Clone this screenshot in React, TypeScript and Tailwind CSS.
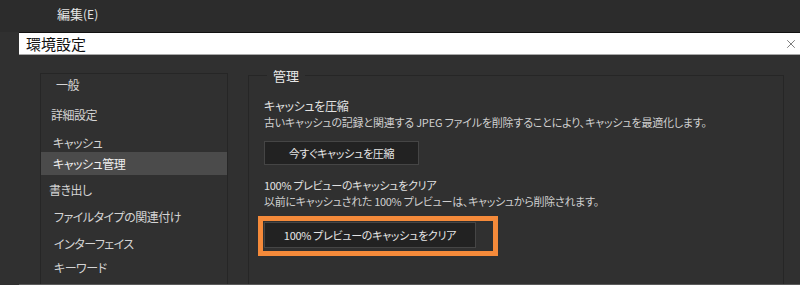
import { X } from "lucide-react";

const navItems = [
  { label: "一般", h: "h-[22px]", pl: "pl-[15px]" },
  { label: "詳細設定", h: "h-[38px]", pl: "pl-[10px]" },
  { label: "キャッシュ", h: "h-[18px]", pl: "pl-[12px]" },
  { label: "キャッシュ管理", h: "h-[23px]", pl: "pl-[12px]", active: true },
  { label: "書き出し", h: "h-[29px]", pl: "pl-[8px]" },
  { label: "ファイルタイプの関連付け", h: "h-[26px]", pl: "pl-[13px]" },
  { label: "インターフェイス", h: "h-[28px]", pl: "pl-[13px]" },
  { label: "キーワード", h: "h-[19px]", pl: "pl-[13px]" },
];

const jp = "font-['Noto_Sans_CJK_JP','Noto_Sans',sans-serif] [font-feature-settings:'palt']";

export default function App() {
  return (
    <div className={`w-[800px] h-[285px] overflow-hidden bg-[#303030] ${jp} flex flex-col`}>
      {/* Menu bar */}
      <div className="h-[32px] bg-[#2c2c2c] flex items-center pl-[57px] pb-[4px]">
        <span className="text-[13px] text-[#e4e4e4]">
          編集<span className="text-[12px]">(E)</span>
        </span>
      </div>

      {/* Dialog title */}
      <div className="ml-[19px] h-[23px] bg-white border-t border-t-[#111] border-b border-b-[#a8a8a8] flex items-center justify-between pl-[7px] pr-[2px]">
        <span className="text-[15px] leading-none text-[#111]">環境設定</span>
        <X className="w-[14px] h-[14px] text-[#555]" strokeWidth={1.3} />
      </div>

      {/* Body */}
      <div className="flex-1 ml-[19px] flex border-b border-b-[#5a5a5a]">
        <div className="flex flex-1 pl-[21px] pt-[18px]">
          {/* Left nav */}
          <div className="w-[188px] border border-[#262626] border-b-0 flex flex-col">
            {navItems.map((item) => (
              <div
                key={item.label}
                className={`${item.h} ${item.pl} flex items-center text-[12px] tracking-[-0.5px] ${
                  item.active ? "bg-[#4b4b4b] text-[#f0f0f0]" : "text-[#d4d4d4]"
                }`}
              >
                {item.label}
              </div>
            ))}
          </div>

          {/* Right group box */}
          <div className="ml-[20px] w-[536px] mt-[2px] relative border border-[#262626] border-b-0 pl-[15px] pt-[22px]">
            <span className="absolute left-[18px] top-[-10px] px-[6px] bg-[#303030] text-[13px] text-[#e8e8e8]">
              管理
            </span>

            <div className="text-[12px] leading-[16px] tracking-[-0.3px] text-[#e2e2e2]">キャッシュを圧縮</div>
            <div className="text-[11px] leading-[16px] tracking-[-0.2px] text-[#cfcfcf]">
              古いキャッシュの記録と関連する JPEG ファイルを削除することにより、キャッシュを最適化します。
            </div>
            <button className="mt-[11px] w-[155px] h-[24px] bg-[#222222] border border-[#454545] text-[11px] tracking-[-0.3px] text-[#e6e6e6] flex items-center justify-center">
              今すぐキャッシュを圧縮
            </button>

            <div className="mt-[12px] text-[11px] leading-[16px] tracking-[-0.3px] text-[#e2e2e2]">
              100% プレビューのキャッシュをクリア
            </div>
            <div className="text-[11px] leading-[16px] tracking-[-0.3px] text-[#cfcfcf]">
              以前にキャッシュされた 100% プレビューは、キャッシュから削除されます。
            </div>
            <div className="mt-[7px] -ml-[6px] w-[240px] h-[40px] border-[5px] border-[#f58a3a] pt-[1px] pl-[1px]">
              <button className="w-[212px] h-[26px] bg-[#222222] border border-[#454545] text-[11px] tracking-[-0.3px] text-[#e6e6e6] flex items-center justify-center">
                100% プレビューのキャッシュをクリア
              </button>
            </div>
          </div>
        </div>
      </div>
    </div>
  );
}
